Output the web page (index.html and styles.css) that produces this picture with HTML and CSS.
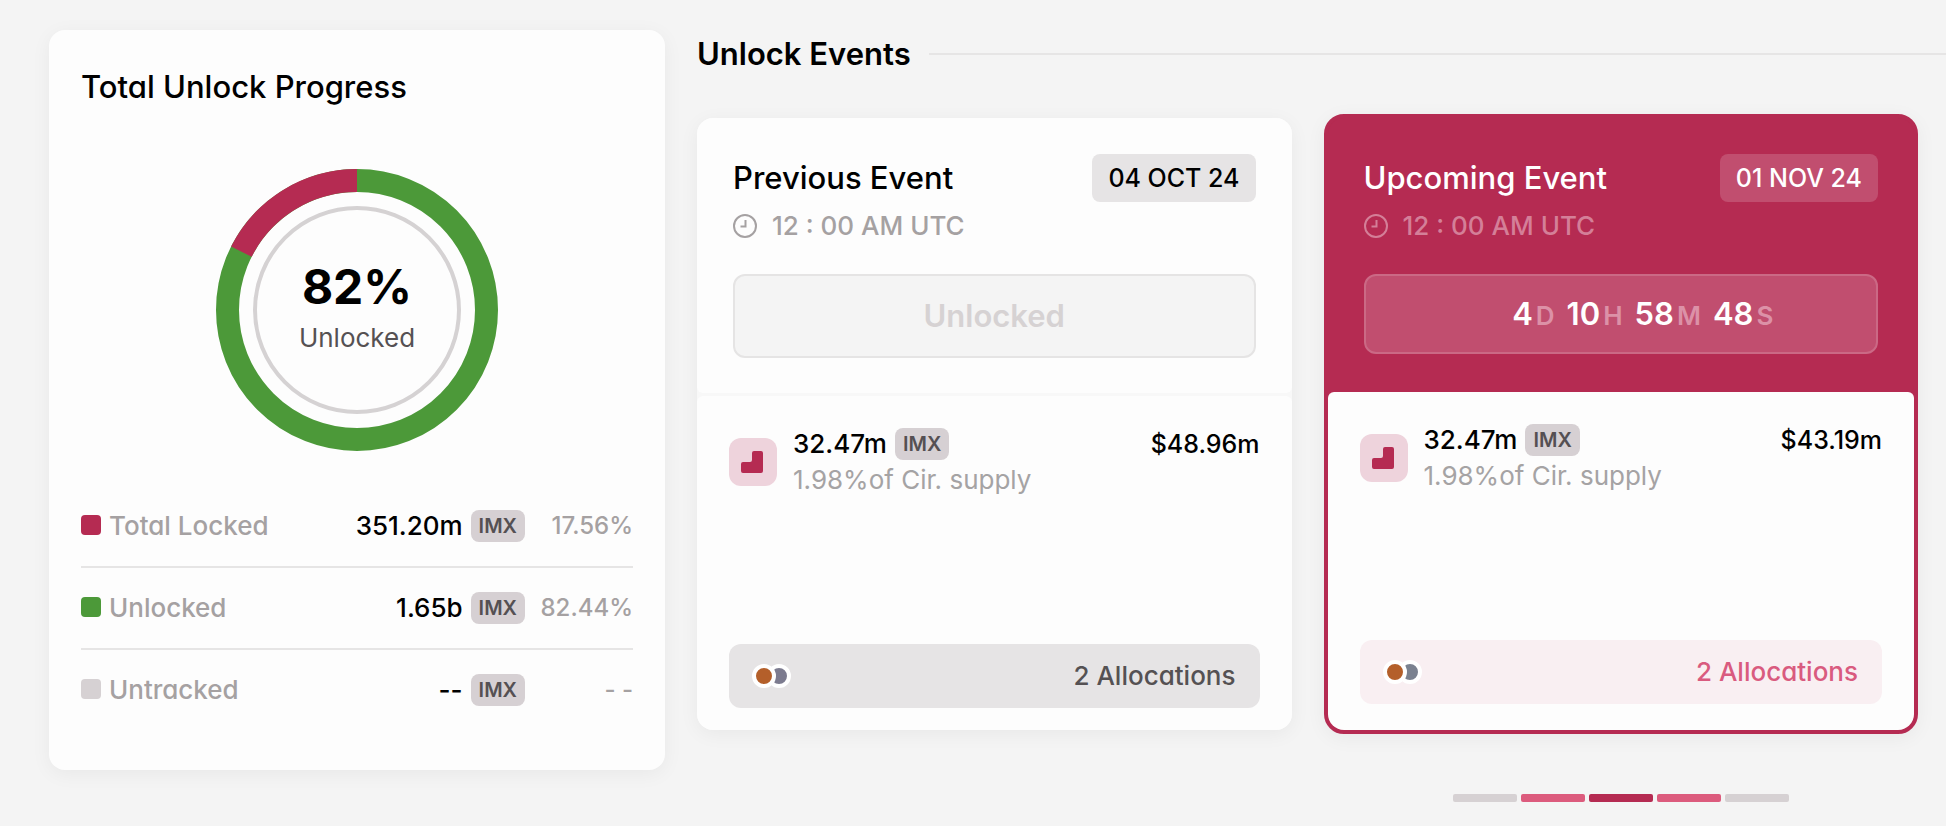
FILE: index.html
```html
<!DOCTYPE html>
<html lang="en">
<head>
    <meta charset="UTF-8">
    <meta name="viewport" content="width=device-width, initial-scale=1.0">
    <title>Token Unlocks</title>
    <link rel="stylesheet" href="styles.css">
</head>
<body>
    <main class="page">
        <section class="progress-card">
            <h2 class="title">Total Unlock Progress</h2>

            <div class="donut">
                <svg class="donut-chart" viewBox="0 0 282 282" aria-hidden="true">
                    <circle cx="141" cy="141" r="129.5" fill="none" stroke="#4c9939" stroke-width="23"/>
                    <circle cx="141" cy="141" r="129.5" fill="none" stroke="#b52b52" stroke-width="23" pathLength="100" stroke-dasharray="17.56 82.44" stroke-dashoffset="-82.44" transform="rotate(-90 141 141)"/>
                    <circle cx="141" cy="141" r="102" fill="none" stroke="#d5d2d3" stroke-width="4"/>
                </svg>
                <div class="donut-text">
                    <strong>82%</strong>
                    <span>Unlocked</span>
                </div>
            </div>

            <table class="legend">
                <tr>
                    <th scope="row"><span class="dot locked"></span>Total Locked</th>
                    <td class="amount">351.20m<span class="symbol">IMX</span></td>
                    <td class="percent">17.56%</td>
                </tr>
                <tr>
                    <th scope="row"><span class="dot unlocked"></span>Unlocked</th>
                    <td class="amount">1.65b<span class="symbol">IMX</span></td>
                    <td class="percent">82.44%</td>
                </tr>
                <tr>
                    <th scope="row"><span class="dot"></span>Untracked</th>
                    <td class="amount">--<span class="symbol">IMX</span></td>
                    <td class="percent">- -</td>
                </tr>
            </table>
        </section>

        <section class="events">
            <div class="events-header">
                <h2 class="title bold">Unlock Events</h2>
            </div>

            <div class="event-list">
                <article class="event">
                    <div class="event-top">
                        <div class="event-head">
                            <h3 class="title">Previous Event</h3>
                            <span class="date">04 OCT 24</span>
                        </div>
                        <div class="time">
                            <svg width="24" height="24" viewBox="0 0 24 24" fill="none" stroke="currentColor" stroke-width="2" aria-hidden="true">
                                <circle cx="12" cy="12" r="11"/>
                                <path d="M12.5 6v6.5H7.5"/>
                            </svg>
                            12 : 00 AM UTC
                        </div>
                        <div class="status">Unlocked</div>
                    </div>
                    <div class="event-body">
                        <div class="token">
                            <svg class="token-icon" viewBox="0 0 48 48" aria-hidden="true">
                                <path fill="#b52b52" d="M25 13h7a2 2 0 0 1 2 2v18a2 2 0 0 1-2 2H14a2 2 0 0 1-2-2v-7a2 2 0 0 1 2-2h7a2 2 0 0 0 2-2v-7a2 2 0 0 1 2-2z"/>
                            </svg>
                            <div class="token-info">
                                <div class="token-amount">32.47m<span class="symbol">IMX</span></div>
                                <div class="supply">1.98%of Cir. supply</div>
                            </div>
                            <div class="value">$48.96m</div>
                        </div>
                        <button type="button" class="allocations">
                            <svg width="40" height="24" viewBox="0 0 40 24" stroke="#fff" stroke-width="4" aria-hidden="true">
                                <circle cx="26" cy="12" r="10" fill="#7c7b8f"/>
                                <circle cx="11" cy="12" r="10" fill="#b45f2a"/>
                            </svg>
                            2 Allocations
                        </button>
                    </div>
                </article>

                <article class="event upcoming">
                    <div class="event-top">
                        <div class="event-head">
                            <h3 class="title">Upcoming Event</h3>
                            <span class="date">01 NOV 24</span>
                        </div>
                        <div class="time">
                            <svg width="24" height="24" viewBox="0 0 24 24" fill="none" stroke="currentColor" stroke-width="2" aria-hidden="true">
                                <circle cx="12" cy="12" r="11"/>
                                <path d="M12.5 6v6.5H7.5"/>
                            </svg>
                            12 : 00 AM UTC
                        </div>
                        <div class="status countdown">
                            <span>4<small>D</small></span>
                            <span>10<small>H</small></span>
                            <span>58<small>M</small></span>
                            <span>48<small>S</small></span>
                        </div>
                    </div>
                    <div class="event-body">
                        <div class="token">
                            <svg class="token-icon" viewBox="0 0 48 48" aria-hidden="true">
                                <path fill="#b52b52" d="M25 13h7a2 2 0 0 1 2 2v18a2 2 0 0 1-2 2H14a2 2 0 0 1-2-2v-7a2 2 0 0 1 2-2h7a2 2 0 0 0 2-2v-7a2 2 0 0 1 2-2z"/>
                            </svg>
                            <div class="token-info">
                                <div class="token-amount">32.47m<span class="symbol">IMX</span></div>
                                <div class="supply">1.98%of Cir. supply</div>
                            </div>
                            <div class="value">$43.19m</div>
                        </div>
                        <button type="button" class="allocations">
                            <svg width="40" height="24" viewBox="0 0 40 24" stroke="#fff" stroke-width="4" aria-hidden="true">
                                <circle cx="26" cy="12" r="10" fill="#7a818f"/>
                                <circle cx="11" cy="12" r="10" fill="#b45f2a"/>
                            </svg>
                            2 Allocations
                        </button>
                    </div>
                </article>

                <div class="pager">
                    <button type="button" aria-label="Event 1"></button>
                    <button type="button" aria-label="Event 2" class="near"></button>
                    <button type="button" aria-label="Event 3" class="active"></button>
                    <button type="button" aria-label="Event 4" class="near"></button>
                    <button type="button" aria-label="Event 5"></button>
                </div>
            </div>
        </section>
    </main>
</body>
</html>
```
FILE: styles.css
```css
* {
    box-sizing: border-box;
}

body {
    margin: 0;
    background-color: #f4f4f4;
    color: #000;
    font-family: Inter, sans-serif;
    font-feature-settings: "cv11";
    font-size: 26px;
    font-weight: 500;
    line-height: 32px;
}

.page {
    display: grid;
    grid-template-columns: 616fr 1249fr;
    gap: 32px;
    align-items: start;
    padding: 30px 0 24px 49px;
}

.title {
    margin: 0;
    font-size: 31px;
    font-weight: 500;
    line-height: 40px;
}

.title.bold {
    font-weight: 600;
}

/* Total unlock progress */
.progress-card {
    padding: 37px 32px 40px;
    background-color: #fdfdfd;
    border-radius: 16px;
    box-shadow: 0 4px 20px rgba(0, 0, 0, 0.05);
}

.donut {
    display: grid;
    place-items: center;
    margin: 62px 0 35px;
}

.donut-chart,
.donut-text {
    grid-area: 1 / 1;
}

.donut-chart {
    width: 282px;
    height: 282px;
}

.donut-text {
    display: flex;
    flex-direction: column;
    align-items: center;
    padding-bottom: 14px;
    color: #555153;
    font-weight: 400;
}

.donut-text strong {
    color: #000;
    font-size: 48px;
    font-weight: 700;
    line-height: 70px;
}

.legend {
    width: 100%;
    border-spacing: 0;
}

.legend th,
.legend td {
    padding: 24px 0;
    border-bottom: 2px solid #e6e5e5;
}

.legend tr:last-child th,
.legend tr:last-child td {
    border-bottom: none;
}

.legend th {
    color: #a5a1a2;
    font-weight: 500;
    text-align: left;
}

.dot {
    display: inline-block;
    width: 20px;
    height: 20px;
    margin-right: 8px;
    border-radius: 4px;
    background-color: #d6d1d3;
}

.dot.locked {
    background-color: #b52b52;
}

.dot.unlocked {
    background-color: #4c9939;
}

.amount,
.percent {
    text-align: right;
    white-space: nowrap;
}

.legend .percent {
    width: 108px;
    color: #a5a1a2;
    font-size: 24px;
}

.symbol {
    display: inline-block;
    margin-left: 8px;
    padding: 0 8px;
    border-radius: 8px;
    background-color: #d6d0d3;
    color: #555053;
    font-size: 20px;
    font-weight: 600;
    vertical-align: top;
}

/* Unlock events */
.events {
    padding-top: 4px;
}

.events-header {
    display: flex;
    align-items: center;
    gap: 18px;
    margin-bottom: 40px;
}

.events-header::after {
    content: "";
    flex: 1;
    height: 2px;
    background-color: #e6e5e5;
}

.event-list {
    display: grid;
    grid-template-columns: 1fr 1fr;
    column-gap: 32px;
    align-items: center;
    padding-right: 28px;
}

.event {
    display: grid;
    gap: 3px;
    border-radius: 16px;
    background-color: #f8f8f8;
    box-shadow: 0 4px 20px rgba(0, 0, 0, 0.05);
}

.event-top {
    padding: 36px 36px 35px;
    border-radius: 16px 16px 6px 6px;
    background-color: #fdfdfd;
}

.event-head {
    display: flex;
    justify-content: space-between;
    align-items: center;
}

.date {
    padding: 8px 16px;
    border-radius: 8px;
    background-color: #e6e4e5;
    font-size: 25px;
}

.time {
    display: flex;
    align-items: center;
    gap: 15px;
    margin: 8px 0 32px;
    color: #a5a1a2;
}

.status {
    padding: 20px;
    border: 2px solid #e5e4e4;
    border-radius: 12px;
    background-color: #f4f4f4;
    color: #d6d2d3;
    font-size: 31px;
    font-weight: 600;
    line-height: 40px;
    text-align: center;
}

.event-body {
    padding: 32px 32px 22px;
    border-radius: 6px 6px 16px 16px;
    background-color: #fdfdfd;
}

.token {
    display: flex;
    align-items: flex-start;
    min-height: 216px;
}

.token-icon {
    width: 48px;
    height: 48px;
    margin: 10px 16px 0 0;
    border-radius: 12px;
    background-color: #eed3dc;
}

.token-info {
    display: grid;
    gap: 4px;
}

.supply {
    color: #a5a3a4;
    font-weight: 400;
}

.value {
    margin-left: auto;
    font-size: 25px;
}

.allocations {
    display: flex;
    justify-content: space-between;
    align-items: center;
    width: 100%;
    padding: 16px 24px;
    border: none;
    border-radius: 12px;
    background-color: #e6e4e5;
    color: #555153;
    font: inherit;
    font-feature-settings: inherit;
    cursor: pointer;
}

.allocations svg {
    overflow: visible;
}

/* Upcoming event */
.upcoming {
    gap: 0;
    border: 4px solid #b52b52;
    border-radius: 20px;
    background-color: #b52b52;
}

.upcoming .event-top {
    padding-bottom: 38px;
    background-color: #b52b52;
    color: #fff;
}

.upcoming .date {
    background-color: #c14e6f;
}

.upcoming .time {
    color: #d47f98;
}

.upcoming .status {
    padding: 18px 0 18px 44px;
    border-color: #cb6985;
    background-color: #c14e6f;
    color: #fff;
}

.countdown {
    display: flex;
    justify-content: center;
    gap: 12px;
}

.countdown small {
    margin-left: 3px;
    color: #dc91a7;
    font-size: 26px;
    line-height: 1;
}

.upcoming .event-body {
    padding-bottom: 26px;
}

.upcoming .allocations {
    background-color: #f9eff2;
    color: #d95b7f;
}

.pager {
    grid-column: 2;
    display: flex;
    justify-content: center;
    gap: 4px;
    margin-top: 60px;
}

.pager button {
    width: 64px;
    height: 8px;
    padding: 0;
    border: none;
    border-radius: 2px;
    background-color: #d6d1d3;
    cursor: pointer;
}

.pager .near {
    background-color: #dc5b7d;
}

.pager .active {
    background-color: #b52b52;
}
```
